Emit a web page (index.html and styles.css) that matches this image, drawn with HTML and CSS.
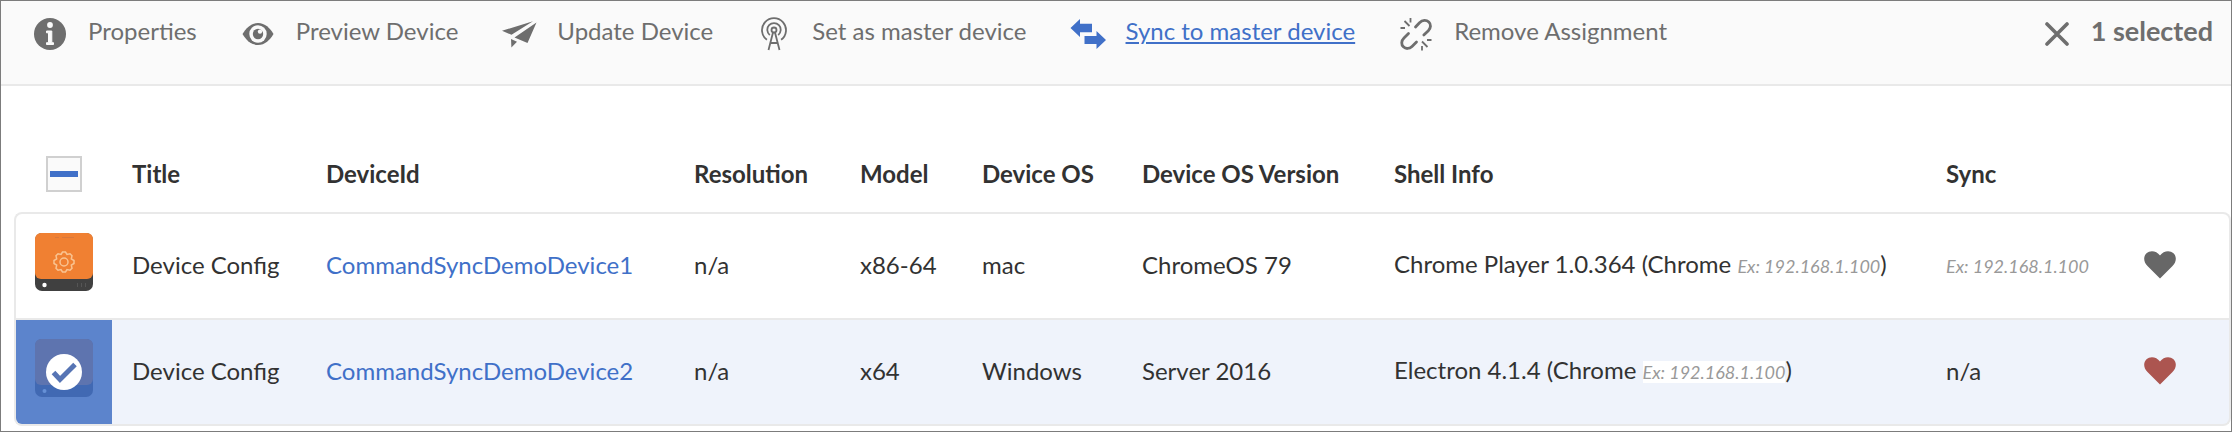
FILE: index.html
```html
<!DOCTYPE html>
<html lang="en">
<head>
<meta charset="utf-8">
<title>Devices</title>
<link rel="stylesheet" href="styles.css">
</head>
<body>
<div class="page">
  <header class="toolbar">
    <nav class="actions" aria-label="Device actions">
      <button class="action" type="button">
        <svg class="icon" viewBox="0 0 36 36" aria-hidden="true"><circle cx="18" cy="18" r="16" fill="currentColor"/><circle cx="18" cy="9" r="2.900" fill="#fafafa"/><path d="M14.500 15h5.300v11.700h1.700v1.800h-7v-1.800h2v-9.900h-2z" fill="#fafafa" stroke="#fafafa" stroke-linejoin="round"/></svg>
        <span>Properties</span>
      </button>
      <button class="action" type="button">
        <svg class="icon" viewBox="0 0 36 36" aria-hidden="true"><path d="M2.500 18C6 12 11 7 18 7s12 5 15.500 11C30 24 25 29 18 29S6 24 2.500 18z" fill="currentColor"/><circle cx="18" cy="18" r="8.700" fill="#fafafa"/><circle cx="18" cy="18" r="5.200" fill="currentColor"/><circle cx="20" cy="15.600" r="2.200" fill="#fafafa"/></svg>
        <span>Preview Device</span>
      </button>
      <button class="action" type="button">
        <svg class="icon" viewBox="0 0 36 36" aria-hidden="true"><path d="M1 14.800L32 5.200 10.500 18.800zM35.500 6.500L26.500 27 13.500 21.500zM10 23l6 2.700-5.600 5.800z" fill="currentColor"/></svg>
        <span>Update Device</span>
      </button>
      <button class="action" type="button">
        <svg class="icon" viewBox="0 0 36 36" aria-hidden="true"><g fill="none" stroke="currentColor" stroke-width="1.800"><circle cx="18" cy="14" r="2.500"/><path d="M13.800 19a6.700 6.700 0 1 1 8.400 0M10.900 23.800a12 12 0 1 1 14.200 0M17 16.500L12.500 34M19 16.500L23.500 34M14.200 27h7.600"/></g></svg>
        <span>Set as master device</span>
      </button>
      <button class="action action-current" type="button">
        <svg class="icon" viewBox="0 0 36 36" aria-hidden="true"><path d="M.5 12L10 3v4.800h12v8.400H10V21zM36 24L26.500 15v5H14.500v8h12v5z" fill="currentColor"/></svg>
        <span>Sync to master device</span>
      </button>
      <button class="action" type="button">
        <svg class="icon" viewBox="0 0 36 36" aria-hidden="true"><g fill="none" stroke="currentColor" stroke-linecap="round"><path stroke-width="2.800" d="M17.500 11l4-4.300c3-3 7-2.800 9.300-.6s2.300 5.700-.5 8.600l-4.500 4.200M10.500 17.500l-4.500 4.500c-3 3-2.800 6.600-.6 8.800s5.800 2.400 8.600-.4L18.500 26"/><path stroke-width="1.800" stroke-linecap="butt" d="M6.500 5l5 5M12.500 2v4.500M2.500 12H7M24 25.500l5.500 5.500M29 24h4.500M24 30v4.500"/></g></svg>
        <span>Remove Assignment</span>
      </button>
    </nav>
    <button class="selection" type="button">
      <svg class="close" viewBox="0 0 24 24" aria-hidden="true"><path d="M2 2l20 20M22 2L2 22" stroke="currentColor" stroke-width="3.600" stroke-linecap="round"/></svg>
      <span>1 selected</span>
    </button>
  </header>
  <main class="content">
    <table class="devices">
      <colgroup><col class="c-check"><col class="c-title"><col class="c-id"><col class="c-res"><col class="c-model"><col class="c-os"><col class="c-version"><col class="c-shell"><col class="c-sync"><col class="c-status"></colgroup>
      <thead>
        <tr><th class="pick"><input class="check-all" type="checkbox" aria-label="Select all devices"></th><th>Title</th><th>DeviceId</th><th>Resolution</th><th>Model</th><th>Device OS</th><th>Device OS Version</th><th>Shell Info</th><th>Sync</th><th></th></tr>
      </thead>
      <tbody>
        <tr>
          <td class="pick"><svg class="thumb" viewBox="0 0 58 58" role="img" aria-label="Device"><rect width="58" height="58" rx="7" fill="#404040"/><rect width="58" height="46" rx="6" fill="#f08032"/><path d="M20 4.500h4M27 4.500h12" stroke="#d9783c"/><g fill="none" stroke="#f9c391" stroke-width="1.500"><path d="M26 21.500l1.500-2.500h3l1.500 2.500 3-.7 2 2-.7 3 2.700 1.700v3l-2.700 1.700.7 3-2 2-3-.7-1.500 2.500h-3L26 36.500l-3 .7-2-2 .7-3-2.700-1.700v-3l2.700-1.700-.7-3 2-2z"/><circle cx="29" cy="29" r="4"/></g><circle cx="9.500" cy="52" r="2.200" fill="#fff"/><path d="M42.500 50v4M46.500 50v4M50.500 50v4" stroke="#555"/></svg></td>
          <td>Device Config</td><td><a href="#device1">CommandSyncDemoDevice1</a></td><td>n/a</td><td>x86-64</td><td>mac</td><td>ChromeOS 79</td>
          <td>Chrome Player 1.0.364 (Chrome <span class="example">Ex: 192.168.1.100</span>)</td>
          <td><span class="example">Ex: 192.168.1.100</span></td>
          <td class="status"><svg class="heart" viewBox="0 0 32 28" role="img" aria-label="Status"><path d="M16 27.500L3.500 15C-1 10.500-.5 5 2.500 2.200 6-1 12.500-.5 16 4.500 19.500-.5 26-1 29.500 2.200 32.500 5 33 10.500 28.500 15z" fill="currentColor"/></svg></td>
        </tr>
        <tr class="selected">
          <td class="pick"><svg class="thumb" viewBox="0 0 58 58" role="img" aria-label="Selected"><rect width="58" height="58" rx="7" fill="#4169b3"/><rect width="58" height="46" rx="6" fill="#5e74af"/><circle cx="9.500" cy="52" r="2" fill="#6690d6"/><circle cx="29" cy="33" r="18" fill="#fff"/><path d="M18.500 33.500l6.500 7L40 25.500" fill="none" stroke="#5674b4" stroke-width="5"/></svg></td>
          <td>Device Config</td><td><a href="#device2">CommandSyncDemoDevice2</a></td><td>n/a</td><td>x64</td><td>Windows</td><td>Server 2016</td>
          <td>Electron 4.1.4 (Chrome <span class="example">Ex: 192.168.1.100</span>)</td>
          <td>n/a</td>
          <td class="status alert"><svg class="heart" viewBox="0 0 32 28" role="img" aria-label="Status"><path d="M16 27.500L3.500 15C-1 10.500-.5 5 2.500 2.200 6-1 12.500-.5 16 4.500 19.500-.5 26-1 29.500 2.200 32.500 5 33 10.500 28.500 15z" fill="currentColor"/></svg></td>
        </tr>
      </tbody>
    </table>
  </main>
</div>
</body>
</html>
```
FILE: styles.css
```css
* { box-sizing: border-box; }

body {
  margin: 0;
  background: #fff;
  color: #323232;
  font: 24px/30px Lato, "Noto Sans", sans-serif;
}

button {
  padding: 0;
  border: 0;
  background: none;
  color: inherit;
  font: inherit;
  white-space: nowrap;
}

svg { display: block; flex: none; }

.page {
  min-height: 100vh;
  border: 1px solid #7c7c7c;
}

.toolbar {
  display: flex;
  justify-content: space-between;
  padding: 15px 18px 32px 31px;
  border-bottom: 2px solid #e9e9e9;
  background: #fafafa;
  color: #6e6e6e;
}

.actions { display: flex; gap: 43px; }

.action {
  display: flex;
  align-items: center;
  gap: 20px;
}

.action span { padding-bottom: 6px; }

.icon { width: 36px; height: 36px; }

.action-current {
  color: #4070c8;
  text-decoration: underline;
}

.selection {
  display: flex;
  align-items: center;
  gap: 22px;
  font-size: 27px;
  font-weight: 700;
}

.selection span { padding-bottom: 6px; }

.close { width: 24px; height: 24px; }

.content { padding: 50px 0 4px 13px; }

.devices {
  width: 100%;
  border-collapse: separate;
  border-spacing: 0;
  table-layout: fixed;
  white-space: nowrap;
}

.c-check { width: 98px; }
.c-title { width: 194px; }
.c-id { width: 368px; }
.c-res { width: 166px; }
.c-model { width: 122px; }
.c-os { width: 160px; }
.c-version { width: 252px; }
.c-sync { width: 198px; }
.c-status { width: 107px; }

th, td {
  height: 106px;
  padding: 0 0 2px 20px;
  border-bottom: 2px solid #e9e9e9;
  text-align: left;
}

th {
  height: 76px;
  padding-bottom: 0;
  border: 0;
}

tbody tr:first-child td {
  height: 108px;
  border-top: 2px solid #e9e9e9;
}

.devices th.pick { padding: 0 0 0 32px; }

.devices td.pick {
  padding: 0 0 8px 19px;
  border-left: 2px solid #e9e9e9;
}

td:last-child { border-right: 2px solid #e9e9e9; }
tbody tr:first-child td:first-child { border-top-left-radius: 8px; }
tbody tr:first-child td:last-child { border-top-right-radius: 8px; }
.selected td:first-child { border-bottom-left-radius: 8px; }
.selected td:last-child { border-bottom-right-radius: 8px; }

.check-all {
  display: block;
  width: 36px;
  height: 36px;
  margin: 0;
  appearance: none;
  border: 2px solid #d0d0d0;
  background: linear-gradient(#4070c8, #4070c8) center / 28px 6px no-repeat #fafafa;
}

a { color: #4070c8; text-decoration: none; }

.thumb { width: 58px; height: 58px; }

.selected td { background: #eff3fb; }
.selected td.pick { background: #5c84cc; }

.example {
  color: #999;
  font-size: 18px;
  font-style: italic;
}

.selected .example { background: #fff; }

.heart { width: 32px; height: 28px; }
.status { color: #676767; }
.status.alert { color: #ac5550; }
```
